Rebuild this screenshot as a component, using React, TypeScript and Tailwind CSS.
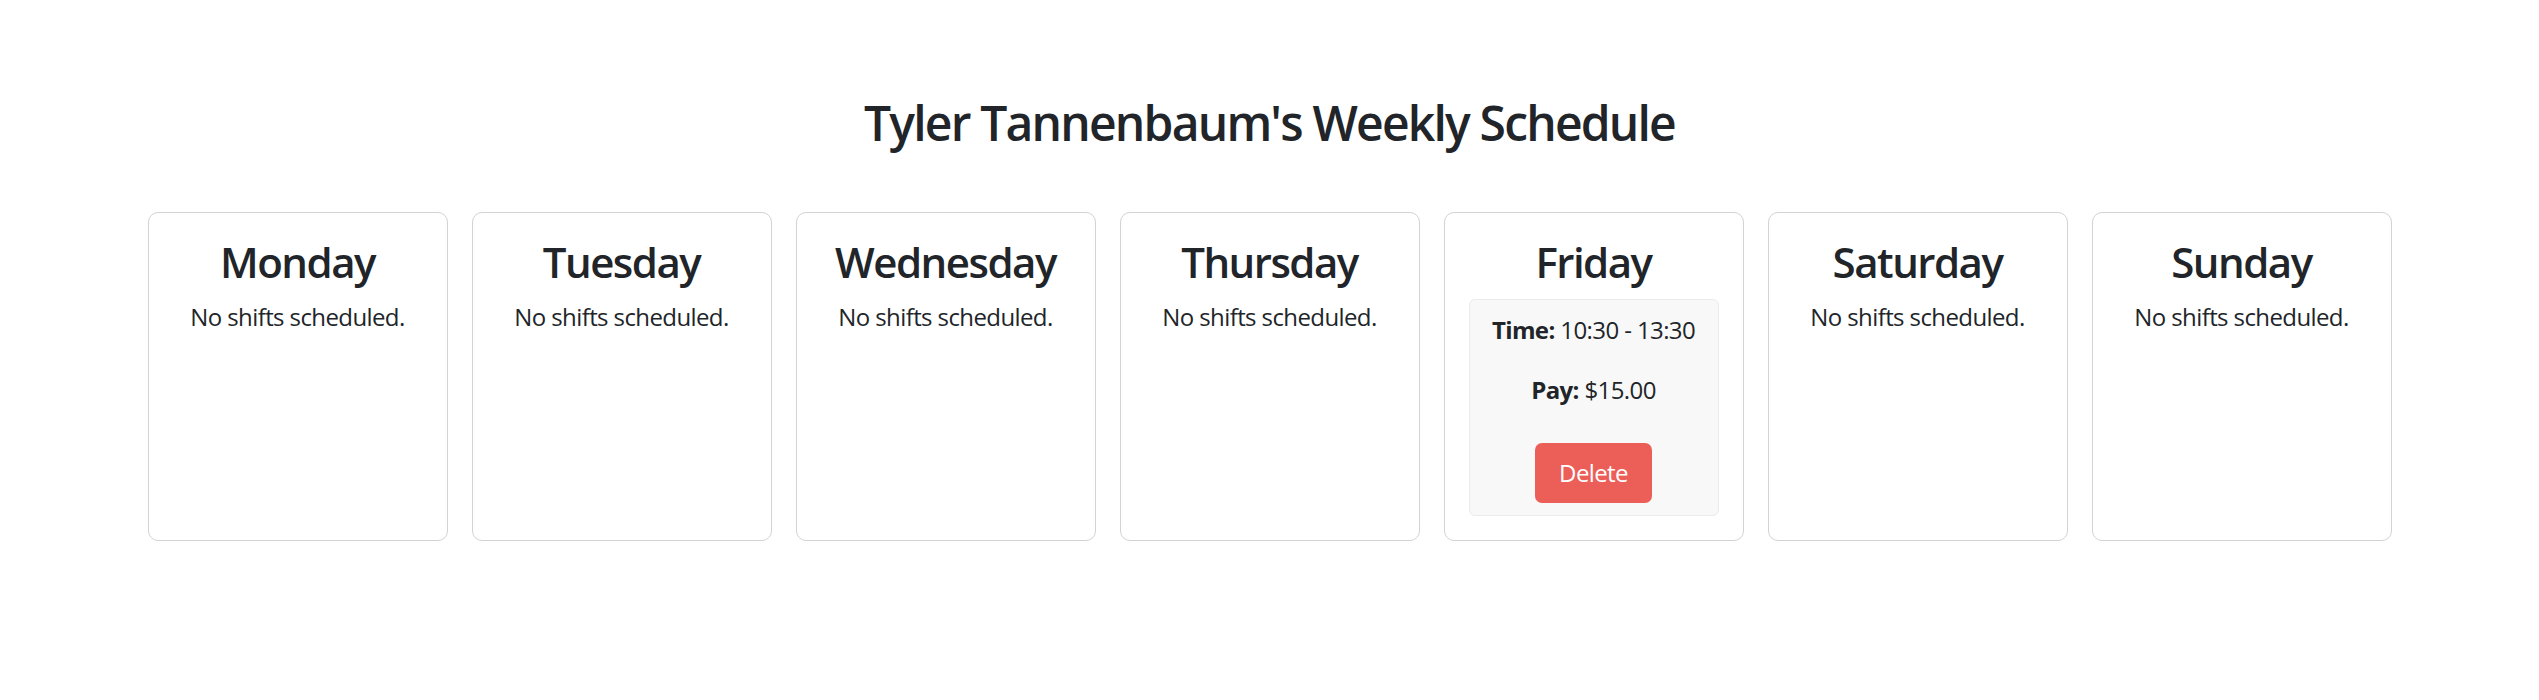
import React from "react";

const days = ["Monday", "Tuesday", "Wednesday", "Thursday", "Friday", "Saturday", "Sunday"];

function DayCard({ day }: { day: string }) {
  const hasShift = day === "Friday";
  return (
    <div className="w-[300px] shrink-0 rounded-[10px] border border-[#d3d3d3] bg-white p-[24px] text-center">
      <h3 className="mb-[12px] text-[42px] font-semibold leading-[1.2] tracking-[-1.5px] text-[#212529]">{day}</h3>
      {hasShift ? (
        <div className="rounded-[6px] border border-[#ebebeb] bg-[#f8f8f8] p-[12px]">
          <p className="mb-[24px] leading-[36px]">
            <strong className="font-bold">Time:</strong> 10:30 - 13:30
          </p>
          <p className="leading-[36px]">
            <strong className="font-bold">Pay:</strong> $15.00
          </p>
          <div className="mt-[35px] flex justify-center">
            <button className="flex h-[60px] w-[117px] items-center justify-center rounded-[7px] bg-[#ec5e58] text-[24px] leading-[36px] text-white">
              Delete
            </button>
          </div>
        </div>
      ) : (
        <p className="leading-[36px]">No shifts scheduled.</p>
      )}
    </div>
  );
}

export default function App() {
  return (
    <div
      className="min-h-[700px] w-full bg-white text-[24px] tracking-[-0.6px] text-[#212529]"
      style={{ fontFamily: '"Open Sans", "Noto Sans", sans-serif' }}
    >
      <div className="pt-[94px]">
        <h2 className="mb-[60px] text-center text-[48px] font-semibold leading-[1.2] tracking-[-1.8px]">
          Tyler Tannenbaum's Weekly Schedule
        </h2>
        <div className="flex justify-center gap-[24px]">
          {days.map((d) => (
            <DayCard key={d} day={d} />
          ))}
        </div>
      </div>
    </div>
  );
}
